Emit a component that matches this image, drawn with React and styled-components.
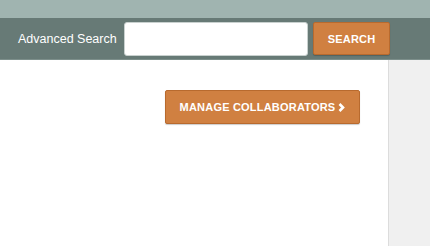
import React from 'react';
import styled, { createGlobalStyle } from 'styled-components';

const GlobalStyle = createGlobalStyle`
  html, body { margin: 0; padding: 0; }
  body {
    width: 430px;
    height: 246px;
    overflow: hidden;
    font-family: "Liberation Sans", Arial, sans-serif;
    background: #fff;
  }
`;

const Page = styled.div`
  display: flex;
  flex-direction: column;
  height: 246px;
`;

const TopStrip = styled.div`
  height: 18px;
  background: #a0b4b0;
`;

const SearchBar = styled.div`
  display: flex;
  align-items: center;
  height: 41px;
  padding-left: 18px;
  background: #677a76;
  border-bottom: 1px solid #7d8f8b;
`;

const Label = styled.span`
  color: #fff;
  font-size: 12.5px;
  margin-right: 12px;
  width: 94px;
  white-space: nowrap;
`;

const SearchInput = styled.input`
  box-sizing: border-box;
  width: 184px;
  height: 34px;
  margin: 0 5px 0 0;
  border: 1px solid #c9d1cf;
  border-radius: 3px;
  background: #fff;
  outline: none;
`;

const OrangeButton = styled.button`
  display: flex;
  align-items: center;
  justify-content: center;
  gap: 3px;
  box-sizing: border-box;
  height: ${p => p.$h}px;
  width: ${p => p.$w}px;
  padding: 0;
  margin: 0;
  background: #d08041;
  border: 1px solid #b86a2e;
  border-radius: 2px;
  box-shadow: 0 1px 1px rgba(0, 0, 0, 0.2);
  color: #fff;
  font-family: "Liberation Sans", Arial, sans-serif;
  font-weight: 700;
  font-size: 11px;
  letter-spacing: 0.2px;
  cursor: pointer;
`;

const Body = styled.div`
  flex: 1;
  display: flex;
`;

const Main = styled.div`
  flex: 1;
  display: flex;
  justify-content: flex-end;
  align-items: flex-start;
  padding: 30px 28px 0 0;
  background: #fff;
`;

const Aside = styled.div`
  width: 41px;
  background: #f0f0f0;
  border-left: 1px solid #dcdcdc;
`;

const Chevron = () => (
  <svg width="7" height="9" viewBox="0 0 7 9">
    <path d="M1.5 1 L5 4.5 L1.5 8" fill="none" stroke="#fff" strokeWidth="2.6" />
  </svg>
);

export default function App() {
  return (
    <>
      <GlobalStyle />
      <Page>
        <TopStrip />
        <SearchBar>
          <Label>Advanced Search</Label>
          <SearchInput type="text" />
          <OrangeButton $w={77} $h={33}>SEARCH</OrangeButton>
        </SearchBar>
        <Body>
          <Main>
            <OrangeButton $w={195} $h={34}>
              MANAGE COLLABORATORS <Chevron />
            </OrangeButton>
          </Main>
          <Aside />
        </Body>
      </Page>
    </>
  );
}
